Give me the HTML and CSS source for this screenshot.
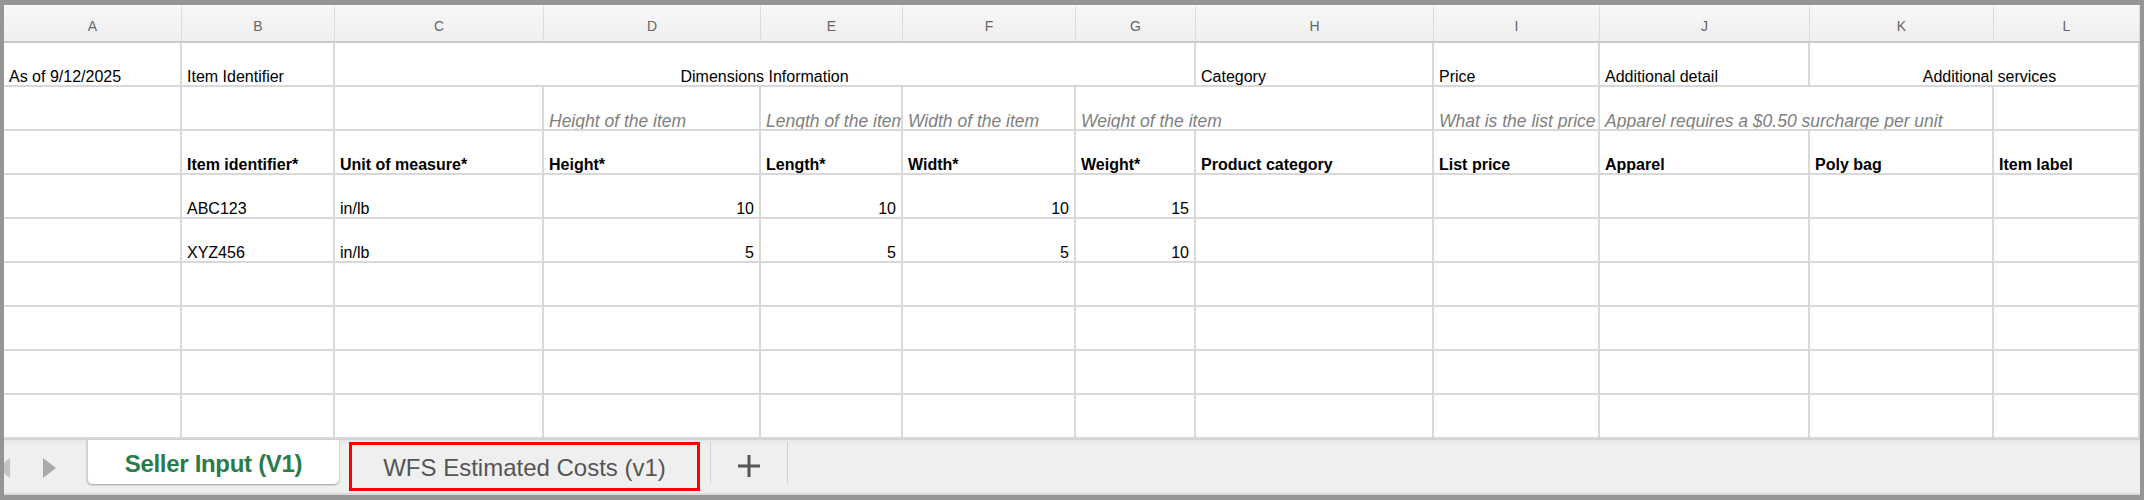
FILE: index.html
```html
<!DOCTYPE html>
<html lang="en">

<head>
    <meta charset="UTF-8">
    <meta name="viewport" content="width=device-width, initial-scale=1.0">
    <title>Seller Input (V1)</title>
    <link rel="stylesheet" href="styles.css">
</head>

<body>
    <div class="window">
        <div class="sheet">
            <!-- column letters -->
            <div class="head">A</div>
            <div class="head">B</div>
            <div class="head">C</div>
            <div class="head">D</div>
            <div class="head">E</div>
            <div class="head">F</div>
            <div class="head">G</div>
            <div class="head">H</div>
            <div class="head">I</div>
            <div class="head">J</div>
            <div class="head">K</div>
            <div class="head">L</div>

            <!-- row 1 -->
            <div class="c">As of 9/12/2025</div>
            <div class="c">Item Identifier</div>
            <div class="c span5 center">Dimensions Information</div>
            <div class="c">Category</div>
            <div class="c">Price</div>
            <div class="c">Additional detail</div>
            <div class="c span2 center services">Additional services</div>

            <!-- row 2 -->
            <div class="c"></div>
            <div class="c"></div>
            <div class="c"></div>
            <div class="c hint">Height of the item</div>
            <div class="c hint">Length of the item</div>
            <div class="c hint">Width of the item</div>
            <div class="c hint span2">Weight of the item</div>
            <div class="c hint">What is the list price of the item?</div>
            <div class="c hint span2">Apparel requires a $0.50 surcharge per unit</div>
            <div class="c"></div>

            <!-- row 3 -->
            <div class="c"></div>
            <div class="c b">Item identifier*</div>
            <div class="c b">Unit of measure*</div>
            <div class="c b">Height*</div>
            <div class="c b">Length*</div>
            <div class="c b">Width*</div>
            <div class="c b">Weight*</div>
            <div class="c b">Product category</div>
            <div class="c b">List price</div>
            <div class="c b">Apparel</div>
            <div class="c b">Poly bag</div>
            <div class="c b">Item label</div>

            <!-- row 4 -->
            <div class="c"></div>
            <div class="c">ABC123</div>
            <div class="c">in/lb</div>
            <div class="c num">10</div>
            <div class="c num">10</div>
            <div class="c num">10</div>
            <div class="c num">15</div>
            <div class="c"></div>
            <div class="c"></div>
            <div class="c"></div>
            <div class="c"></div>
            <div class="c"></div>

            <!-- row 5 -->
            <div class="c"></div>
            <div class="c">XYZ456</div>
            <div class="c">in/lb</div>
            <div class="c num">5</div>
            <div class="c num">5</div>
            <div class="c num">5</div>
            <div class="c num">10</div>
            <div class="c"></div>
            <div class="c"></div>
            <div class="c"></div>
            <div class="c"></div>
            <div class="c"></div>
        </div>

        <div class="tabbar">
            <div class="nav">
                <svg width="83" height="53" viewBox="0 0 83 53">
                    <polygon points="6,18 6,38 -7,28" fill="#c4c4c4" />
                    <polygon points="39,18 39,38 52,28" fill="#a9a9a9" />
                </svg>
            </div>
            <div class="tab active">Seller Input (V1)</div>
            <div class="tab marked">WFS Estimated Costs (v1)</div>
            <span class="sep"></span>
            <div class="add">
                <svg width="22" height="22" viewBox="0 0 22 22">
                    <rect x="9.5" y="0" width="3" height="22" fill="#555" />
                    <rect x="0" y="9.5" width="22" height="3" fill="#555" />
                </svg>
            </div>
            <span class="sep"></span>
        </div>
    </div>

    <script>
        // pad the sheet with empty rows 6-9
        var sheet = document.querySelector(".sheet")
        for (let i = 0; i < 4 * 12; i++) {
            var cell = document.createElement("div")
            cell.className = "c"
            sheet.appendChild(cell)
        }
    </script>
</body>

</html>
```

FILE: styles.css
```css
* {
    margin: 0;
    padding: 0;
    box-sizing: border-box;
}

body {
    background-color: #949494;
    font-family: "Liberation Sans", Arial, sans-serif;
}

.window {
    width: 2144px;
    height: 500px;
    border-style: solid;
    border-color: #959595;
    border-width: 5px 4px 5px 4px;
    background-color: #fff;
    display: flex;
    flex-direction: column;
}

.sheet {
    display: grid;
    grid-template-columns: 178px 153px 209px 217px 142px 173px 120px 238px 166px 210px 184px 146px;
    grid-template-rows: 38px repeat(9, 44px);
    overflow: hidden;
}

.head {
    display: flex;
    justify-content: center;
    align-items: center;
    padding-top: 4px;
    font-size: 14px;
    color: #666;
    background: linear-gradient(#f7f7f7, #efefef);
    border-top: 1px solid #fbfbfb;
    border-right: 1px solid #dcdcdc;
    border-bottom: 2px solid #c9c9c9;
}

.c {
    display: flex;
    align-items: flex-end;
    padding: 0 5px;
    font-size: 16px;
    line-height: 16px;
    color: #000;
    white-space: nowrap;
    overflow: hidden;
    border-right: 2px solid #d8d8d8;
    border-bottom: 2px solid #d8d8d8;
}

.span5 {
    grid-column: span 5;
}

.span2 {
    grid-column: span 2;
}

.center {
    justify-content: center;
}

.services {
    padding-left: 36px;
}

.hint {
    font-size: 17.5px;
    font-style: italic;
    color: #7f7f7f;
}

.b {
    font-weight: bold;
}

.num {
    justify-content: flex-end;
}

.tabbar {
    flex: 1;
    display: flex;
    align-items: flex-start;
    background: linear-gradient(#e8e8e8, #efefef 6px);
    border-top: 1px solid #d2d2d2;
    border-bottom: 2px solid #dadada;
}

.nav {
    width: 83px;
    height: 53px;
    overflow: hidden;
}

.nav svg {
    display: block;
}

.tab {
    display: flex;
    justify-content: center;
    align-items: center;
    white-space: nowrap;
}

.tab.active {
    width: 252px;
    height: 44px;
    padding-top: 3px;
    background-color: #fff;
    border-left: 1px solid #d0d0d0;
    border-radius: 0 0 5px 5px;
    box-shadow: 0 1px 2px rgba(0, 0, 0, 0.35);
    font-size: 24px;
    font-weight: bold;
    letter-spacing: -0.3px;
    color: #2b7b4b;
}

.tab.marked {
    width: 351px;
    height: 49px;
    margin-left: 10px;
    margin-top: 2px;
    padding-top: 2px;
    border: 3px solid #ff0000;
    background-color: #efefef;
    font-size: 24px;
    color: #555;
}

.sep {
    width: 1px;
    height: 41px;
    margin-top: 2px;
    margin-left: 10px;
    background-color: #cfcfcf;
}

.add {
    width: 76px;
    height: 44px;
    display: flex;
    justify-content: center;
    align-items: center;
    padding-top: 8px;
}

.add + .sep {
    margin-left: 0;
}
```
